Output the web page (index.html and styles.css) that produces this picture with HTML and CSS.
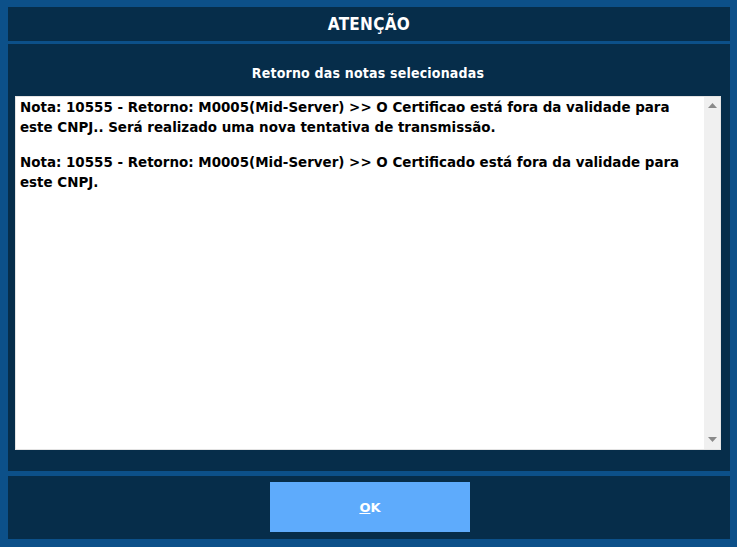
FILE: index.html
```html
<!DOCTYPE html>
<html lang="pt">
<head>
<meta charset="utf-8">
<link rel="stylesheet" href="styles.css">
</head>
<body>
<div class="dialog">
  <div class="panel header"><h1 class="title">ATENÇÃO</h1></div>
  <div class="panel content">
    <div class="subtitle">Retorno das notas selecionadas</div>
    <div class="memo">
      <div class="memo-text">
        <p>Nota: 10555 - Retorno: M0005(Mid-Server) &gt;&gt; O Certificao está fora da validade para este CNPJ.. Será realizado uma nova tentativa de transmissão.</p>
        <p>Nota: 10555 - Retorno: M0005(Mid-Server) &gt;&gt; O Certificado está fora da validade para este CNPJ.</p>
      </div>
      <div class="scrollbar">
        <svg class="arrow" width="9" height="5" viewBox="0 0 9 5"><path d="M0 5 L4.5 0 L9 5 Z" fill="#8a8a8a"/></svg>
        <svg class="arrow" width="9" height="5" viewBox="0 0 9 5"><path d="M0 0 L4.5 5 L9 0 Z" fill="#8a8a8a"/></svg>
      </div>
    </div>
  </div>
  <div class="panel footer">
    <button class="ok"><span class="u">O</span>K</button>
  </div>
</div>
</body>
</html>
```
FILE: styles.css
```css
html, body {
  margin: 0;
  padding: 0;
  background: #0c5089;
  height: 547px;
  overflow: hidden;
}
.dialog {
  display: flex;
  flex-direction: column;
  padding: 7px 7px 0 8px;
}
.panel {
  background: #062d4a;
}
.header {
  height: 34px;
  display: flex;
  align-items: center;
  justify-content: center;
}
.title {
  margin: 0;
  color: #ffffff;
  font-family: "DejaVu Sans Condensed", "DejaVu Sans", sans-serif;
  font-weight: bold;
  font-size: 17px;
  letter-spacing: 0.3px;
}
.content {
  margin-top: 3px;
  height: 427px;
  display: flex;
  flex-direction: column;
  padding: 0 9px 21px 7px;
  box-sizing: border-box;
}
.subtitle {
  color: #ffffff;
  font-family: "DejaVu Sans Condensed", "DejaVu Sans", sans-serif;
  font-weight: bold;
  font-size: 14px;
  letter-spacing: 0.2px;
  text-align: center;
  height: 52px;
  padding-top: 3px;
  line-height: 52px;
  box-sizing: border-box;
}
.memo {
  flex: 1;
  background: #ffffff;
  border: 1px solid #e3e3e3;
  display: flex;
}
.memo-text {
  flex: 1;
  padding: 1px 4px;
  font-family: Tahoma, "DejaVu Sans", sans-serif;
  font-weight: bold;
  font-size: 13.45px;
  line-height: 20px;
  color: #000000;
}
.memo-text p {
  margin: 0 0 15px 0;
  padding-right: 20px;
}
.scrollbar {
  width: 16px;
  background: #f0f0f0;
  display: flex;
  flex-direction: column;
  justify-content: space-between;
  align-items: center;
  padding: 6px 0 7px;
}
.footer {
  margin-top: 5px;
  height: 63px;
  display: flex;
  justify-content: center;
  padding-top: 6px;
  box-sizing: border-box;
}
.ok {
  width: 200px;
  height: 50px;
  background: #5eabfc;
  border: none;
  color: #ffffff;
  font-family: Tahoma, "DejaVu Sans", sans-serif;
  font-weight: bold;
  font-size: 13px;
  padding: 0;
  margin-left: 2px;
}
.u {
  text-decoration: underline;
}
```
